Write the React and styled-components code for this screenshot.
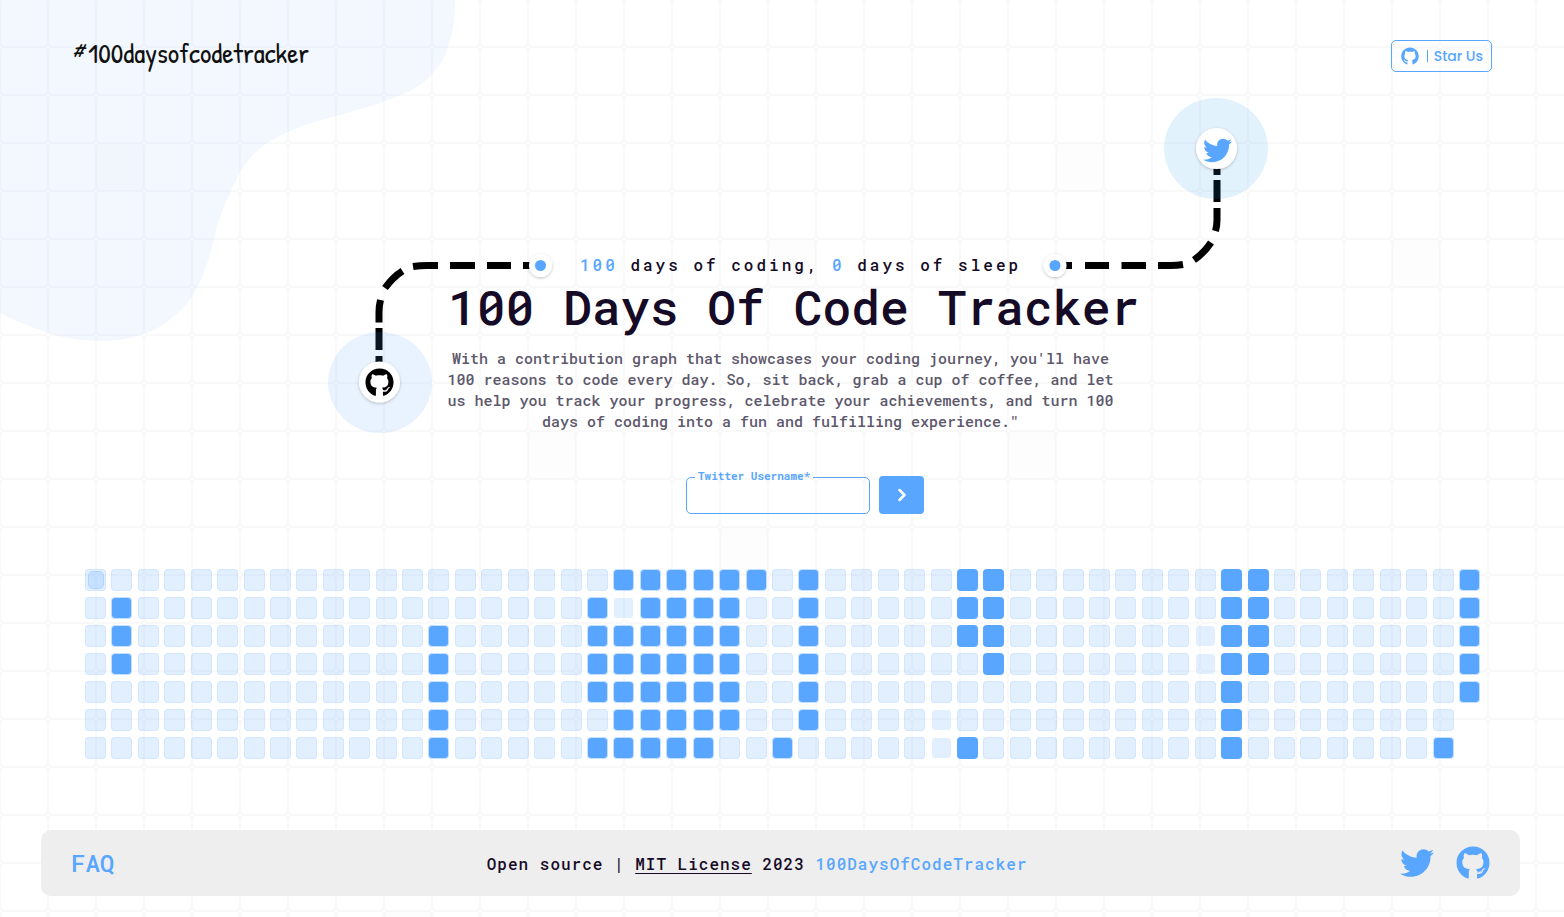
import React from "react";
import styled, { createGlobalStyle, css } from "styled-components";
import { FaTwitter, FaGithub } from "react-icons/fa";
import { AiFillGithub } from "react-icons/ai";
import { FiChevronRight } from "react-icons/fi";

const BLUE = "#58a6ff";
const INK = "#150b26";
const MONO = `"Roboto Mono", "DejaVu Sans Mono", "Liberation Mono", monospace`;

const GlobalStyle = createGlobalStyle`
  *, *::before, *::after { box-sizing: border-box; }
  body { margin: 0; background: #fff; color: ${INK}; font-family: ${MONO}; font-weight: 500; }
  a { color: inherit; text-decoration: none; }
`;

const Page = styled.div`
  position: relative;
  isolation: isolate;
  display: flex;
  flex-direction: column;
  min-height: 100vh;
  overflow: hidden;
`;

const Backdrop = styled.svg`
  position: absolute;
  z-index: -1;
  top: 0;
  left: 0;
  width: 100%;
  height: 100%;
`;

const Header = styled.header`
  display: flex;
  justify-content: space-between;
  align-items: center;
  height: 96px;
  padding: 16px 72px 0;
`;

const Brand = styled.a`
  display: flex;
  align-items: center;
  padding-bottom: 6px;
  font: 400 28px/32px "Patrick Hand", Lato, sans-serif;
  color: #111;
`;

const Hash = styled.span`
  width: 16px;
  font-size: 28px;
  font-style: italic;
  line-height: 20px;
  align-self: flex-start;
`;

const StarButton = styled.a`
  display: flex;
  align-items: center;
  height: 32px;
  padding: 0 8px;
  border: 1px solid ${BLUE};
  border-radius: 5px;
  color: ${BLUE};
  font: 500 14px/20px Poppins, Inter, sans-serif;
`;

const Divider = styled.span`
  width: 1px;
  height: 12px;
  margin: 0 6px 0 7px;
  background: ${BLUE};
`;

const Hero = styled.section`
  position: relative;
  display: flex;
  flex-direction: column;
  align-items: center;
  padding-top: 157px;
`;

const Trail = styled.svg`
  position: absolute;
  z-index: -1;
  top: 0;
  left: 50%;
  width: 1000px;
  height: 344px;
  transform: translateX(-50%);
  overflow: visible;
`;

const Copy = styled.div`
  width: 668px;
`;

const Tagline = styled.p`
  margin: 0;
  padding-left: 132px;
  font-size: 16px;
  line-height: 24px;
  letter-spacing: 3px;
  white-space: nowrap;
`;

const Accent = styled.span`
  color: ${BLUE};
`;

const Title = styled.h1`
  margin: 0;
  font-size: 48px;
  font-weight: 500;
  line-height: 60px;
  white-space: nowrap;
`;

const Lead = styled.p`
  margin: 11px 1px 0 -2px;
  font-size: 15px;
  line-height: 21px;
  text-align: center;
  color: #5d586b;
`;

const Search = styled.form`
  display: flex;
  align-items: flex-end;
  gap: 9px;
  margin-top: 36px;
  padding-left: 238px;
`;

const Field = styled.fieldset`
  width: 184px;
  height: 46px;
  min-width: 0;
  margin: 0;
  padding: 0 8px;
  border: 1px solid ${BLUE};
  border-radius: 5px;
`;

const Legend = styled.legend`
  padding: 0 3px 2px;
  color: ${BLUE};
  font-size: 11px;
  font-weight: 700;
  line-height: 16px;
`;

const Input = styled.input`
  display: block;
  width: 100%;
  height: 26px;
  padding: 0;
  border: 0;
  outline: 0;
  background: transparent;
  font: 14px/20px ${MONO};
  color: ${INK};
`;

const Submit = styled.button`
  display: grid;
  place-items: center;
  width: 45px;
  height: 38px;
  padding: 0;
  border: 0;
  border-radius: 4px;
  background: ${BLUE};
  color: #fff;
`;

const Graph = styled.div`
  display: grid;
  grid-template-rows: repeat(7, 22px);
  grid-auto-flow: column;
  grid-auto-columns: 21px;
  justify-content: space-between;
  row-gap: 6px;
  margin: 55px 84px 0 85px;
`;

const tones = {
  empty: css`
    background: rgba(88, 166, 255, 0.18);
    border: 1px solid rgba(88, 166, 255, 0.12);
  `,
  weak: css`
    background: rgba(88, 166, 255, 0.18);
    background-clip: padding-box;
    border: 1px solid transparent;
  `,
  soft: css`
    background: ${BLUE};
    background-clip: padding-box;
    border: 1px solid rgba(88, 166, 255, 0.35);
  `,
  full: css`
    background: ${BLUE};
  `,
};

const Day = styled.span`
  display: grid;
  place-items: center;
  border-radius: 4px;
  ${({ $tone }) => tones[$tone]}
`;

const Today = styled.span`
  width: 16px;
  height: 18px;
  border: 1px solid rgba(88, 166, 255, 0.2);
  border-radius: 5px;
  background: rgba(88, 166, 255, 0.2);
`;

const Footer = styled.footer`
  display: flex;
  justify-content: space-between;
  align-items: center;
  height: 66px;
  margin: auto 44px 21px 41px;
  padding: 0 30px;
  border-radius: 10px;
  background: #eee;
`;

const Faq = styled.a`
  color: ${BLUE};
  font-size: 24px;
  line-height: 32px;
`;

const Legal = styled.p`
  margin: 0;
  padding-top: 1px;
  font-size: 16px;
  line-height: 24px;
  letter-spacing: 1px;
`;

const License = styled.a`
  text-decoration: underline;
  text-underline-offset: 3px;
  text-decoration-thickness: 1px;
`;

const Social = styled.nav`
  display: flex;
  align-items: center;
  gap: 22px;
  color: ${BLUE};

  a { display: flex; }
`;

const MirroredOctocat = styled(FaGithub)`
  transform: scaleX(-1);
`;

const TINTED = [[96, 143], [1056, 143], [768, 239], [1392, 239], [528, 431], [1008, 431], [720, 527], [384, 911]];

const FILLED = [
  [20, 21, 22, 23, 24, 25, 27, 33, 34, 43, 44, 52],
  [1, 19, 21, 22, 23, 24, 27, 33, 34, 43, 44, 52],
  [1, 13, 19, 20, 21, 22, 23, 24, 27, 33, 34, 43, 44, 52],
  [1, 13, 19, 20, 21, 22, 23, 24, 27, 34, 43, 44, 52],
  [13, 19, 20, 21, 22, 23, 24, 27, 43, 52],
  [13, 20, 21, 22, 23, 24, 27, 43],
  [13, 19, 20, 21, 22, 23, 26, 33, 43, 51],
];
const WEAK = ["20-1", "42-2", "42-3", "32-5", "32-6"];
const SOLID_WEEKS = [33, 34, 43, 44];

const DAYS = Array.from({ length: 53 * 7 - 2 }, (_, i) => ({ week: Math.floor(i / 7), day: i % 7 }));

function toneOf({ week, day }) {
  if (FILLED[day].includes(week)) return SOLID_WEEKS.includes(week) ? "full" : "soft";
  return WEAK.includes(`${week}-${day}`) ? "weak" : "empty";
}

function Background() {
  return (
    <Backdrop aria-hidden="true">
      <defs>
        <pattern id="cells" width="48" height="48" y="-1" patternUnits="userSpaceOnUse">
          <rect x="0" y="0" width="48" height="48" rx="5" fill="none" stroke="#150b26" strokeOpacity="0.025" strokeWidth="2" />
        </pattern>
      </defs>
      <path
        fill="#f3f8ff"
        d="M455 0C455 32 448 58 433 73C427 80 418 88 403 94C384 103 360 109 337 116C320 120 303 125 288 132C281 135 274 139 267 143C256 151 247 160 240 172C236 179 233 186 230 193C225 203 222 213 218 223C214 238 208 268 197 288C192 299 183 309 173 317C164 325 154 331 143 334C130 339 116 341 100 341C82 341 64 338 48 333C31 327 15 321 0 313V0Z"
      />
      <rect width="100%" height="100%" fill="url(#cells)" />
      {TINTED.map(([x, y]) => (
        <rect key={`${x}-${y}`} x={x} y={y} width="48" height="48" rx="5" fill="#150b26" fillOpacity="0.006" />
      ))}
    </Backdrop>
  );
}

function HeroTrail() {
  return (
    <Trail viewBox="282 96 1000 344" aria-hidden="true">
      <defs>
        <filter id="lift" x="-30%" y="-30%" width="160%" height="160%">
          <feDropShadow dx="0" dy="1" stdDeviation="1.5" floodOpacity="0.25" />
        </filter>
      </defs>
      <g fill="none" stroke="#000" strokeWidth="7">
        <path d="M530 265.5H523M511 265.5H487M475 265.5H450M438 265.5H427Q420 265.5 413 266.5M402.500 271Q393 277 385 288M380.500 300Q379 306 379 312V322.500M379 328V350M379 356V364" />
        <path d="M1065 265.500H1072M1085 265.500H1109M1121.500 265.500H1146M1158 265.500H1170Q1177 265.500 1183 264.500M1194 260Q1204 253 1211 242.500M1215.500 231Q1217 226 1217 220V208M1217 202V180M1217 175V167" />
      </g>
      <ellipse cx="380" cy="382.500" rx="52" ry="50.500" fill={BLUE} fillOpacity="0.13" />
      <ellipse cx="1216" cy="148.500" rx="52" ry="50.500" fill="#1d9bf0" fillOpacity="0.13" />
      <g fill="#fff" filter="url(#lift)">
        <circle cx="379.500" cy="382" r="20.500" />
        <circle cx="1216.500" cy="148.500" r="20.500" />
        <circle cx="540.500" cy="265.500" r="11.500" />
        <circle cx="1055" cy="265.500" r="11.500" />
      </g>
      <circle cx="540.500" cy="265.500" r="5.500" fill={BLUE} />
      <circle cx="1055" cy="265.500" r="5.500" fill={BLUE} />
      <g transform="translate(394 368) scale(-1 1)">
        <FaGithub size={29} color="#000" />
      </g>
      <FaTwitter x="1203" y="136" size={29} color={BLUE} />
    </Trail>
  );
}

export default function App() {
  return (
    <Page>
      <GlobalStyle />
      <Background />
      <Header>
        <Brand href="#">
          <Hash>#</Hash>100daysofcodetracker
        </Brand>
        <StarButton href="#star">
          <AiFillGithub size={20} />
          <Divider />
          Star Us
        </StarButton>
      </Header>
      <main>
        <Hero>
          <HeroTrail />
          <Copy>
            <Tagline>
              <Accent>100</Accent> days of coding, <Accent>0</Accent> days of sleep
            </Tagline>
            <Title>100 Days Of Code Tracker</Title>
            <Lead>
              With a contribution graph that showcases your coding journey, you'll have 100 reasons to code every day.
              So, sit back, grab a cup of coffee, and let us help you track your progress, celebrate your achievements,
              and turn 100 days of coding into a fun and fulfilling experience."
            </Lead>
            <Search onSubmit={(event) => event.preventDefault()}>
              <Field>
                <Legend>
                  <label htmlFor="username">Twitter Username*</label>
                </Legend>
                <Input id="username" name="username" type="text" required />
              </Field>
              <Submit type="submit" aria-label="Show my graph">
                <FiChevronRight size={20} strokeWidth={3} />
              </Submit>
            </Search>
          </Copy>
        </Hero>
        <Graph role="img" aria-label="Contribution graph">
          {DAYS.map((cell, i) => (
            <Day key={i} $tone={toneOf(cell)}>
              {i === 0 && <Today />}
            </Day>
          ))}
        </Graph>
      </main>
      <Footer>
        <Faq href="#faq">FAQ</Faq>
        <Legal>
          Open source | <License href="#license">MIT License</License> 2023 <Accent>100DaysOfCodeTracker</Accent>
        </Legal>
        <Social aria-label="Social links">
          <a href="#twitter" aria-label="Twitter">
            <FaTwitter size={34} />
          </a>
          <a href="#github" aria-label="GitHub">
            <MirroredOctocat size={34} />
          </a>
        </Social>
      </Footer>
    </Page>
  );
}
